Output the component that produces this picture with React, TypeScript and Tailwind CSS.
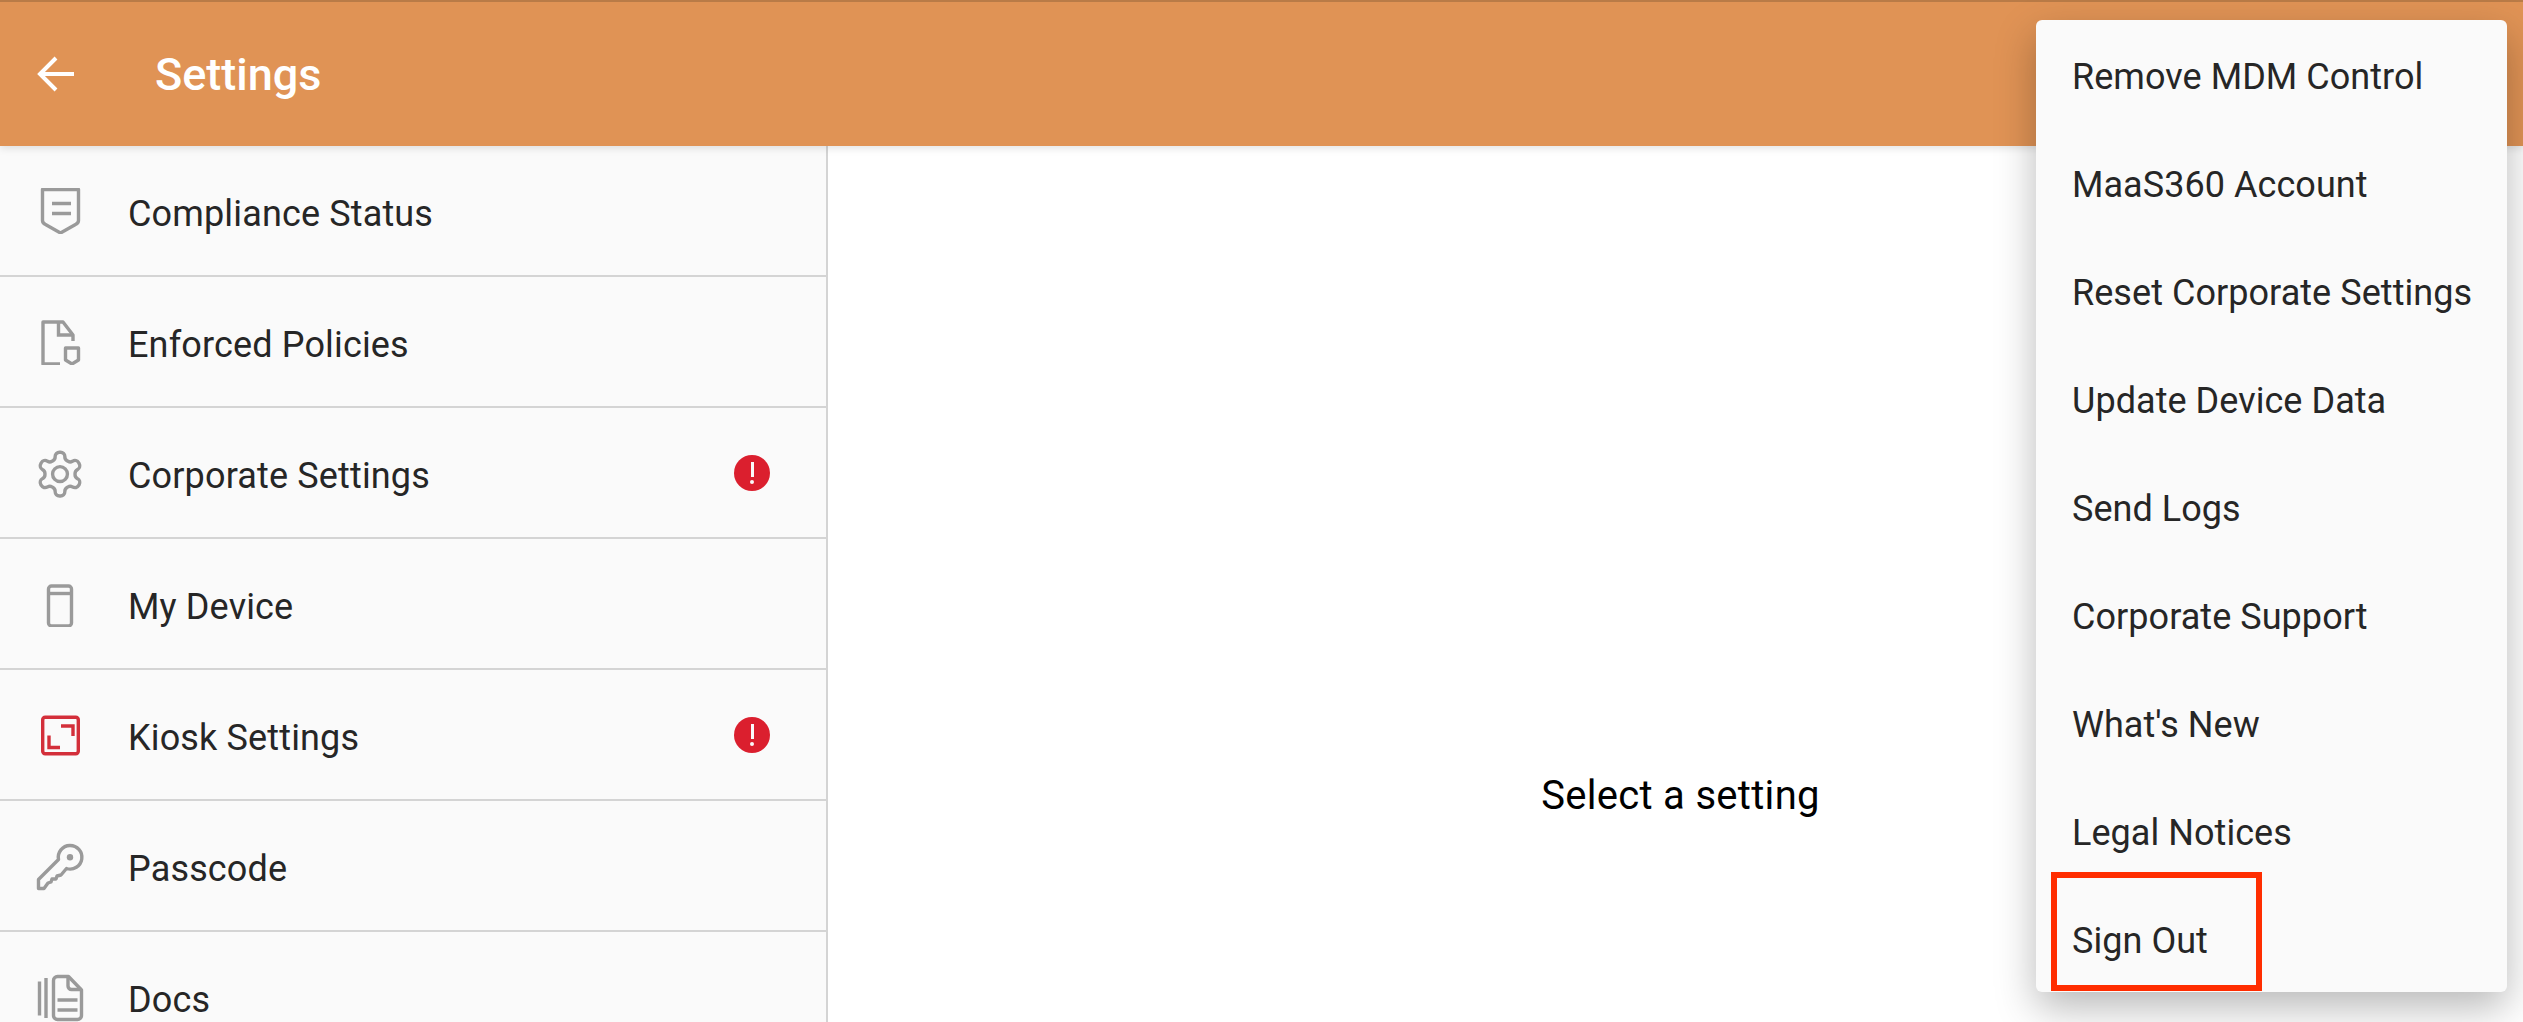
import React from "react";

const G = "#9a9a9a";
const SW = 3.4;

function Shield() {
  return (
    <svg width="46" height="46" viewBox="0 0 46 46" fill="none" stroke={G} strokeWidth={SW}>
      <path d="M5.500 1.500h36v31c0 2-1 3-3 4l-15 8.500-15-8.500c-2-1-3-2-3-4z" strokeLinejoin="round" />
      <path d="M15 15.500h19M15 25.500h19" />
    </svg>
  );
}
function Doc() {
  return (
    <svg width="46" height="46" viewBox="0 0 46 46" fill="none" stroke={G} strokeWidth={SW}>
      <path d="M23 45H6V3h20l10 13v6" strokeLinejoin="round" />
      <path d="M21.500 3v13H36" />
      <path d="M28.500 29h13v12l-6.500 4-6.500-4z" strokeLinejoin="round" />
    </svg>
  );
}
function Gear() {
  return (
    <svg width="46" height="46" viewBox="1.500 1 21 21" fill="none" stroke={G} strokeWidth="1.550" strokeLinejoin="round" className="overflow-visible">
      <path d="M12.220 2h-.44a2 2 0 0 0-2 2v.18a2 2 0 0 1-1 1.730l-.43.25a2 2 0 0 1-2 0l-.15-.08a2 2 0 0 0-2.730.73l-.22.38a2 2 0 0 0 .73 2.730l.15.1a2 2 0 0 1 1 1.720v.51a2 2 0 0 1-1 1.740l-.15.09a2 2 0 0 0-.73 2.730l.22.38a2 2 0 0 0 2.730.73l.15-.08a2 2 0 0 1 2 0l.43.25a2 2 0 0 1 1 1.730V20a2 2 0 0 0 2 2h.44a2 2 0 0 0 2-2v-.18a2 2 0 0 1 1-1.730l.43-.25a2 2 0 0 1 2 0l.15.08a2 2 0 0 0 2.730-.73l.22-.39a2 2 0 0 0-.73-2.730l-.15-.08a2 2 0 0 1-1-1.740v-.5a2 2 0 0 1 1-1.740l.15-.09a2 2 0 0 0 .73-2.730l-.22-.38a2 2 0 0 0-2.730-.73l-.15.08a2 2 0 0 1-2 0l-.43-.25a2 2 0 0 1-1-1.730V4a2 2 0 0 0-2-2z" />
      <circle cx="12" cy="12" r="3.400" />
    </svg>
  );
}
function Device() {
  return (
    <svg width="46" height="46" viewBox="0 0 46 46" fill="none" stroke={G} strokeWidth={SW}>
      <rect x="11.500" y="5" width="23" height="40" rx="3" />
      <path d="M11.500 12.500h23" />
    </svg>
  );
}
function Kiosk() {
  const R = "#d32f3a";
  return (
    <svg width="46" height="46" viewBox="0 0 46 46" fill="none" stroke={R} strokeWidth={SW}>
      <rect x="5.700" y="5.200" width="35.600" height="36.600" rx="2.500" />
      <path d="M24 14h12v10M12 23.500v12h11" />
    </svg>
  );
}
function Key() {
  return (
    <svg width="46" height="46" viewBox="0 0 46 46" fill="none" stroke={G} strokeWidth={SW} strokeLinejoin="round" className="overflow-visible">
      <g transform="translate(0 2)">
        <path d="M21.500 14.500 1.500 34.500v9H7l4-5.500 3-1 1-3h4l1-3 4-1 5.500-6.500A11.800 11.800 0 1 0 21.500 14.500z" />
        <circle cx="33" cy="12.200" r="3.200" fill={G} stroke="none" />
      </g>
    </svg>
  );
}
function Docs() {
  return (
    <svg width="46" height="46" viewBox="0 0 46 46" fill="none" stroke={G} strokeWidth={SW} className="overflow-visible">
      <g transform="translate(0 2)">
        <path d="M2.500 5.500v34M9 2v40" />
        <path d="M44.500 14v25.500a4 4 0 0 1-4 4h-20a4 4 0 0 1-4-4v-35a4 4 0 0 1 4-4h11z" strokeLinejoin="round" />
        <path d="M31 1v9a3.500 3.500 0 0 0 3.500 3.500h10M20.500 24h20M20.500 34h20" />
      </g>
    </svg>
  );
}
function Badge() {
  return (
    <div className="w-9 h-9 mr-[-1px] rounded-full bg-[#db1f2e] flex flex-col items-center justify-center gap-[3px]">
      <div className="w-[3px] h-[15px] bg-[#fafafa]" />
      <div className="w-[4px] h-[4px] rounded-full bg-[#fafafa]" />
    </div>
  );
}

const rows = [
  { label: "Compliance Status", icon: <Shield /> },
  { label: "Enforced Policies", icon: <Doc /> },
  { label: "Corporate Settings", icon: <Gear />, alert: true },
  { label: "My Device", icon: <Device /> },
  { label: "Kiosk Settings", icon: <Kiosk />, alert: true },
  { label: "Passcode", icon: <Key /> },
  { label: "Docs", icon: <Docs /> },
];

const menu = [
  "Remove MDM Control",
  "MaaS360 Account",
  "Reset Corporate Settings",
  "Update Device Data",
  "Send Logs",
  "Corporate Support",
  "What's New",
  "Legal Notices",
  "Sign Out",
];

export default function App() {
  return (
    <div className="relative w-[2523px] h-[1022px] overflow-hidden bg-white font-['Roboto',sans-serif] text-[#262626]">
      <header className="relative z-10 h-[146px] bg-[#e09355] border-t-2 border-[#b97b47] shadow-[0_2px_8px_rgba(0,0,0,0.12)] flex items-center">
        <svg className="ml-[36px]" width="40" height="40" viewBox="0 0 40 40" fill="none" stroke="white" strokeWidth="4">
          <path d="M38 20H5M20 4 4 20l16 16" />
        </svg>
        <h1 className="ml-[79px] mt-[2px] text-[45px] font-medium text-white">Settings</h1>
      </header>
      <div className="flex h-[1294px]">
        <aside className="w-[828px] shrink-0 bg-[#fafafa] border-r-2 border-[#d4d4d4]">
          {rows.map((r) => (
            <div key={r.label} className="h-[131px] border-b-2 border-[#d4d4d4] flex items-center pl-[37px] pr-[57px]">
              <div className="w-[46px] h-[46px] shrink-0">{r.icon}</div>
              <span className="ml-[45px] mt-[6px] text-[36px] tracking-[0.15px] flex-1">{r.label}</span>
              {r.alert && <Badge />}
            </div>
          ))}
        </aside>
        <main className="flex-1 flex items-center justify-center text-black text-[40px] tracking-[0.3px] pl-[10px] pt-[5px]">
          Select a setting
        </main>
      </div>
      <div className="absolute z-20 left-[2036px] top-[20px] w-[471px] h-[972px] rounded-[6px] bg-[#fafafa] shadow-[0_16px_40px_rgba(0,0,0,0.28)] flex flex-col">
        {menu.map((m) => (
          <div key={m} className="h-[108px] flex items-center pl-[36px] pt-[6px] text-[36px] tracking-[0.05px]">{m}</div>
        ))}
        <div className="absolute left-[15px] top-[852px] w-[211px] h-[119px] border-[6px] border-[#ff2d00]" />
      </div>
    </div>
  );
}
